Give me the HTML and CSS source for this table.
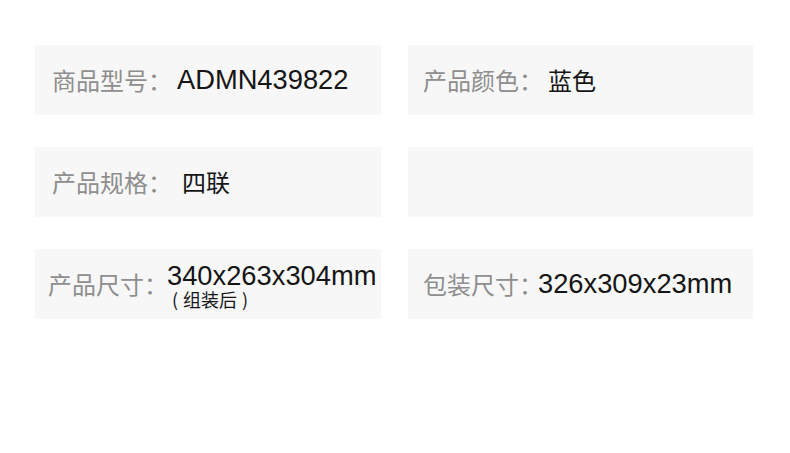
FILE: index.html
```html
<!DOCTYPE html>
<html lang="zh-CN">
<head>
<meta charset="UTF-8">
<meta name="viewport" content="width=device-width, initial-scale=1.0">
<title>产品参数</title>
<link rel="stylesheet" href="styles.css">
</head>
<body>

<div class="spec-grid">
    <div class="spec-item">
        <span class="spec-label">商品型号：</span>
        <span class="spec-value gap-s">ADMN439822</span>
    </div>
    <div class="spec-item right">
        <span class="spec-label">产品颜色：</span>
        <span class="spec-value cjk gap-s">蓝色</span>
    </div>
    <div class="spec-item">
        <span class="spec-label">产品规格：</span>
        <span class="spec-value cjk gap-m">四联</span>
    </div>
    <div class="spec-item right"></div>
    <div class="spec-item wide">
        <span class="spec-label">产品尺寸：</span>
        <div class="spec-value gap-neg">
            <div class="value-line">340x263x304mm</div>
            <div class="value-note"><span class="paren">(</span>组装后<span class="paren">)</span></div>
        </div>
    </div>
    <div class="spec-item right">
        <span class="spec-label">包装尺寸：</span>
        <span class="spec-value gap-neg2">326x309x23mm</span>
    </div>
</div>

</body>
</html>
```

FILE: styles.css
```css
body {
    margin: 0;
    padding: 0;
    background-color: #ffffff;
    font-family: 'Noto Sans CJK SC', 'Liberation Sans', sans-serif;
}

/* 参数表 */
.spec-grid {
    display: grid;
    grid-template-columns: 346px 345px;
    grid-auto-rows: 70px;
    column-gap: 27px;
    row-gap: 32px;
    padding: 45px 0 0 35px;
}

.spec-item {
    display: flex;
    align-items: center;
    padding-left: 17px;
    background-color: #f7f7f7;
}

.spec-item.right {
    padding-left: 15px;
}

.spec-item.wide {
    padding-left: 13px;
}

.spec-label {
    font-size: 24px;
    line-height: 30px;
    color: #8e8e8e;
    white-space: nowrap;
}

.spec-value {
    font-family: 'Liberation Sans', 'Noto Sans CJK SC', sans-serif;
    font-size: 27.3px;
    line-height: 30px;
    color: #151515;
    white-space: nowrap;
}

.spec-value.cjk {
    font-family: 'Noto Sans CJK SC', sans-serif;
    font-size: 24px;
}

.gap-s {
    margin-left: 5px;
}

.gap-m {
    margin-left: 10px;
}

.gap-neg {
    margin-left: -1px;
}

.gap-neg2 {
    margin-left: -5px;
}

.value-line {
    line-height: 30px;
}

/* 注記（組立後） */
.value-note {
    font-family: 'Noto Sans CJK SC', sans-serif;
    font-size: 18px;
    line-height: 16px;
    color: #151515;
}

.value-note .paren {
    margin: 0 5px;
}
```
